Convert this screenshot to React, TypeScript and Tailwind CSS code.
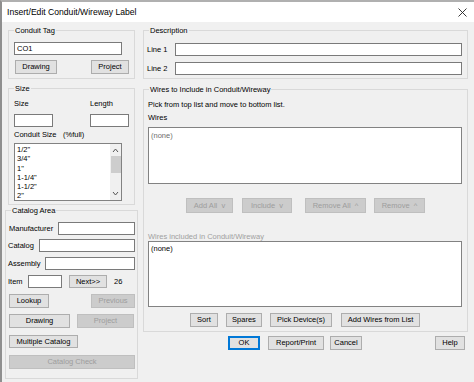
import React from "react";

function Btn({
  w,
  h = 14,
  children,
  off,
  ok,
}: {
  w: number;
  h?: number;
  children: React.ReactNode;
  off?: boolean;
  ok?: boolean;
}) {
  let cls = "border-[#adadad] bg-[#e1e1e1] text-black";
  if (off) cls = "border-[#bfbfbf] bg-[#cccccc] text-[#9d9d9d]";
  if (ok) cls = "border-[#0078d7] bg-[#e1e1e1] text-black border-2";
  return (
    <div
      className={`flex shrink-0 items-center justify-center whitespace-pre border leading-none ${cls}`}
      style={{ width: w, height: h }}
    >
      {children}
    </div>
  );
}

function Box({ w, value }: { w: number; value?: string }) {
  return (
    <input
      readOnly
      defaultValue={value}
      className="block h-[13px] shrink-0 border border-[#7a7a7a] bg-white px-[2px] leading-none outline-none"
      style={{ width: w }}
    />
  );
}

function Group({
  title,
  className,
  children,
}: {
  title: string;
  className: string;
  children: React.ReactNode;
}) {
  return (
    <fieldset className={`border border-[#d9d9d9] ${className}`}>
      <legend className="ml-[5px] px-[1px] leading-[9px]">{title}</legend>
      {children}
    </fieldset>
  );
}

const sizes = ['1/2"', '3/4"', '1"', '1-1/4"', '1-1/2"', '2"'];

export default function App() {
  return (
    <div className="h-[382px] w-[474px] overflow-hidden border-l-2 border-t-2 border-l-[#8f8f8f] border-t-[#b0b0b0] bg-[#f0f0f0] font-['Liberation_Sans',Arial,sans-serif] text-[7.5px] text-black">
      {/* title bar */}
      <div className="flex h-[20px] items-center justify-between bg-white pl-[5px] pr-[7px]">
        <span className="text-[8.6px]">Insert/Edit Conduit/Wireway Label</span>
        <svg width="9" height="9" viewBox="0 0 9 9">
          <path d="M0.5 0.5 L8.5 8.5 M8.5 0.5 L0.5 8.5" stroke="#222" strokeWidth="0.9" />
        </svg>
      </div>

      <div className="flex gap-[5px] pl-[3px]">
        {/* left column */}
        <div className="flex w-[133px] shrink-0 flex-col">
          <Group title="Conduit Tag" className="ml-[3px] mt-[4px] w-[127px] pb-[4px]">
            <div className="ml-[5px] mt-[7px]">
              <Box w={108} value="CO1" />
            </div>
            <div className="mt-[5px] flex">
              <div className="ml-[6px]">
                <Btn w={42}>Drawing</Btn>
              </div>
              <div className="ml-[34px]">
                <Btn w={38}>Project</Btn>
              </div>
            </div>
          </Group>

          <Group title="Size" className="ml-[3px] mt-[5px] w-[127px] pb-[3px]">
            <div className="mt-[6px] flex leading-[9px]">
              <span className="ml-[5px] w-[76px]">Size</span>
              <span>Length</span>
            </div>
            <div className="mt-[6px] flex">
              <div className="ml-[5px]">
                <Box w={39} />
              </div>
              <div className="ml-[37px]">
                <Box w={39} />
              </div>
            </div>
            <div className="mt-[3px] flex leading-[9px]">
              <span className="ml-[5px] w-[49px]">Conduit Size</span>
              <span>(%full)</span>
            </div>
            <div className="ml-[5px] mt-[4px] flex h-[58px] w-[108px] border border-[#828282] bg-white">
              <div className="flex-1 pl-[2px] pt-[1px] leading-[9.3px]">
                {sizes.map((s) => (
                  <div key={s}>{s}</div>
                ))}
              </div>
              <div className="flex w-[11px] flex-col items-center bg-[#f0f0f0]">
                <svg width="7" height="7" viewBox="0 0 7 7" className="mt-[3px]">
                  <path d="M1 5 L3.5 2 L6 5" fill="none" stroke="#555" strokeWidth="1" />
                </svg>
                <div className="mt-[2px] h-[17px] w-[10px] bg-[#cdcdcd]" />
                <div className="flex-1" />
                <svg width="7" height="7" viewBox="0 0 7 7" className="mb-[3px]">
                  <path d="M1 2 L3.5 5 L6 2" fill="none" stroke="#555" strokeWidth="1" />
                </svg>
              </div>
            </div>
          </Group>

          <Group title="Catalog Area" className="mt-[1px] w-[133px] pb-[9px]">
            <div className="mt-[7px] flex items-center">
              <span className="ml-[3px] w-[49px]">Manufacturer</span>
              <Box w={77} />
            </div>
            <div className="mt-[4px] flex items-center">
              <span className="ml-[2px] w-[31px]">Catalog</span>
              <Box w={96} />
            </div>
            <div className="mt-[5px] flex items-center">
              <span className="ml-[2px] w-[37px]">Assembly</span>
              <Box w={90} />
            </div>
            <div className="mt-[5px] flex items-center">
              <span className="ml-[2px] w-[20px]">Item</span>
              <Box w={34} />
              <div className="ml-[7px]">
                <Btn w={38} h={13}>
                  Next&gt;&gt;
                </Btn>
              </div>
              <span className="ml-[7px]">26</span>
            </div>
            <div className="mt-[6px] flex">
              <div className="ml-[3px]">
                <Btn w={40}>Lookup</Btn>
              </div>
              <div className="ml-[42px]">
                <Btn w={44} off>
                  Previous
                </Btn>
              </div>
            </div>
            <div className="mt-[6px] flex">
              <div className="ml-[3px]">
                <Btn w={61}>Drawing</Btn>
              </div>
              <div className="ml-[7px]">
                <Btn w={57} off>
                  Project
                </Btn>
              </div>
            </div>
            <div className="ml-[3px] mt-[7px]">
              <Btn w={69} h={13}>
                Multiple Catalog
              </Btn>
            </div>
            <div className="ml-[3px] mt-[7px]">
              <Btn w={126} off>
                Catalog Check
              </Btn>
            </div>
          </Group>
        </div>

        {/* right column */}
        <div className="flex w-[325px] shrink-0 flex-col">
          <Group title="Description" className="mt-[4px] w-[325px] pb-[3px]">
            <div className="mt-[8px] flex items-center">
              <span className="ml-[3px] w-[28px]">Line 1</span>
              <Box w={287} />
            </div>
            <div className="mt-[6px] flex items-center">
              <span className="ml-[3px] w-[28px]">Line 2</span>
              <Box w={287} />
            </div>
          </Group>

          <Group title="Wires to Include in Conduit/Wireway" className="mt-[6px] w-[325px] pb-[4px]">
            <div className="ml-[4px] mt-[6px] leading-[9px]">Pick from top list and move to bottom list.</div>
            <div className="ml-[4px] mt-[4px] leading-[9px]">Wires</div>
            <div className="ml-[4px] mt-[5px] h-[57px] w-[314px] border border-[#828282] bg-white pl-[2px] pt-[2px] text-[#6d6d6d]">
              (none)
            </div>
            <div className="mt-[14px] flex">
              <div className="ml-[42px]">
                <Btn w={47} h={15} off>
                  {"Add All  v"}
                </Btn>
              </div>
              <div className="ml-[9px]">
                <Btn w={50} h={15} off>
                  {"Include  v"}
                </Btn>
              </div>
              <div className="ml-[13px]">
                <Btn w={61} h={15} off>
                  {"Remove All  ^"}
                </Btn>
              </div>
              <div className="ml-[8px]">
                <Btn w={51} h={15} off>
                  {"Remove  ^"}
                </Btn>
              </div>
            </div>
            <div className="ml-[4px] mt-[19px] leading-[9px] text-[#a0a0a0]">Wires included in Conduit/Wireway</div>
            <div className="ml-[4px] h-[66px] w-[314px] border border-[#828282] bg-white pl-[2px] pt-[1px]">
              (none)
            </div>
            <div className="mt-[6px] flex">
              <div className="ml-[46px]">
                <Btn w={28}>Sort</Btn>
              </div>
              <div className="ml-[8px]">
                <Btn w={36}>Spares</Btn>
              </div>
              <div className="ml-[8px]">
                <Btn w={62}>Pick Device(s)</Btn>
              </div>
              <div className="ml-[9px]">
                <Btn w={79}>Add Wires from List</Btn>
              </div>
            </div>
          </Group>

          <div className="mt-[4px] flex">
            <div className="ml-[85px]">
              <Btn w={32} ok>
                OK
              </Btn>
            </div>
            <div className="ml-[8px]">
              <Btn w={56}>Report/Print</Btn>
            </div>
            <div className="ml-[6px]">
              <Btn w={32}>Cancel</Btn>
            </div>
            <div className="ml-[73px]">
              <Btn w={30}>Help</Btn>
            </div>
          </div>
        </div>
      </div>
    </div>
  );
}
